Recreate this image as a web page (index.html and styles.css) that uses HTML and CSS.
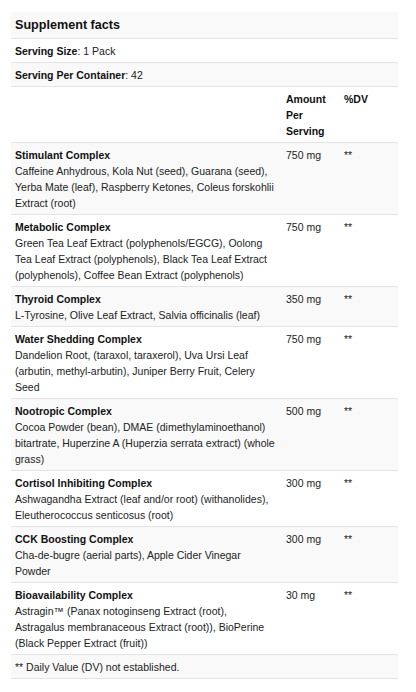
FILE: index.html
```html
<!DOCTYPE html>
<html lang="en">
<head>
<meta charset="utf-8">
<title>Supplement facts</title>
<link rel="stylesheet" href="styles.css">
</head>
<body>
<div class="wrap">
<table class="facts">
  <colgroup>
    <col class="c-name">
    <col class="c-amt">
    <col class="c-dv">
  </colgroup>
  <tbody>
    <tr class="title-row"><th colspan="3" class="title">Supplement facts</th></tr>
    <tr><td colspan="3"><b>Serving Size</b>: 1 Pack</td></tr>
    <tr><td colspan="3"><b>Serving Per Container</b>: 42</td></tr>
    <tr class="head-row"><td></td><th>Amount Per Serving</th><th>%DV</th></tr>
    <tr><td><b>Stimulant Complex</b><br>Caffeine Anhydrous, Kola Nut (seed), Guarana (seed), Yerba Mate (leaf), Raspberry Ketones, Coleus forskohlii Extract (root)</td><td>750 mg</td><td>**</td></tr>
    <tr><td><b>Metabolic Complex</b><br>Green Tea Leaf Extract (polyphenols/EGCG), Oolong Tea Leaf Extract (polyphenols), Black Tea Leaf Extract (polyphenols), Coffee Bean Extract (polyphenols)</td><td>750 mg</td><td>**</td></tr>
    <tr><td><b>Thyroid Complex</b><br>L-Tyrosine, Olive Leaf Extract, Salvia officinalis (leaf)</td><td>350 mg</td><td>**</td></tr>
    <tr><td><b>Water Shedding Complex</b><br>Dandelion Root, (taraxol, taraxerol), Uva Ursi Leaf (arbutin, methyl-arbutin), Juniper Berry Fruit, Celery Seed</td><td>750 mg</td><td>**</td></tr>
    <tr><td><b>Nootropic Complex</b><br>Cocoa Powder (bean), DMAE (dimethylaminoethanol) bitartrate, Huperzine A (Huperzia serrata extract) (whole grass)</td><td>500 mg</td><td>**</td></tr>
    <tr><td><b>Cortisol Inhibiting Complex</b><br>Ashwagandha Extract (leaf and/or root) (withanolides), Eleutherococcus senticosus (root)</td><td>300 mg</td><td>**</td></tr>
    <tr><td><b>CCK Boosting Complex</b><br>Cha-de-bugre (aerial parts), Apple Cider Vinegar Powder</td><td>300 mg</td><td>**</td></tr>
    <tr><td><b>Bioavailability Complex</b><br>Astragin™ (Panax notoginseng Extract (root), Astragalus membranaceous Extract (root)), BioPerine (Black Pepper Extract (fruit))</td><td>30 mg</td><td>**</td></tr>
    <tr><td colspan="3">** Daily Value (DV) not established.</td></tr>
  </tbody>
</table>
</div>
</body>
</html>
```

FILE: styles.css
```css
html, body {
  margin: 0;
  padding: 0;
  background: #fff;
}
.wrap {
  padding: 12px 18px 0 11px;
}
.facts {
  width: 387px;
  border-collapse: collapse;
  table-layout: fixed;
  font-family: "Liberation Sans", Arial, Helvetica, sans-serif;
  font-size: 10.5px;
  line-height: 16px;
  color: #222;
}
.c-name { width: 271px; }
.c-amt { width: 58px; }
.c-dv { width: 58px; }
.facts td, .facts th {
  padding: 4px 4px 3px 4px;
  text-align: left;
  vertical-align: top;
  border-bottom: 1px solid #e4e4e4;
}
.facts th, .facts b {
  font-weight: bold;
  color: #111;
}
.facts tr:nth-child(odd) {
  background: #f9f9f9;
}
.facts .title {
  font-size: 12.6px;
  line-height: 18px;
  padding: 4px 4px 4px 4px;
}
```
